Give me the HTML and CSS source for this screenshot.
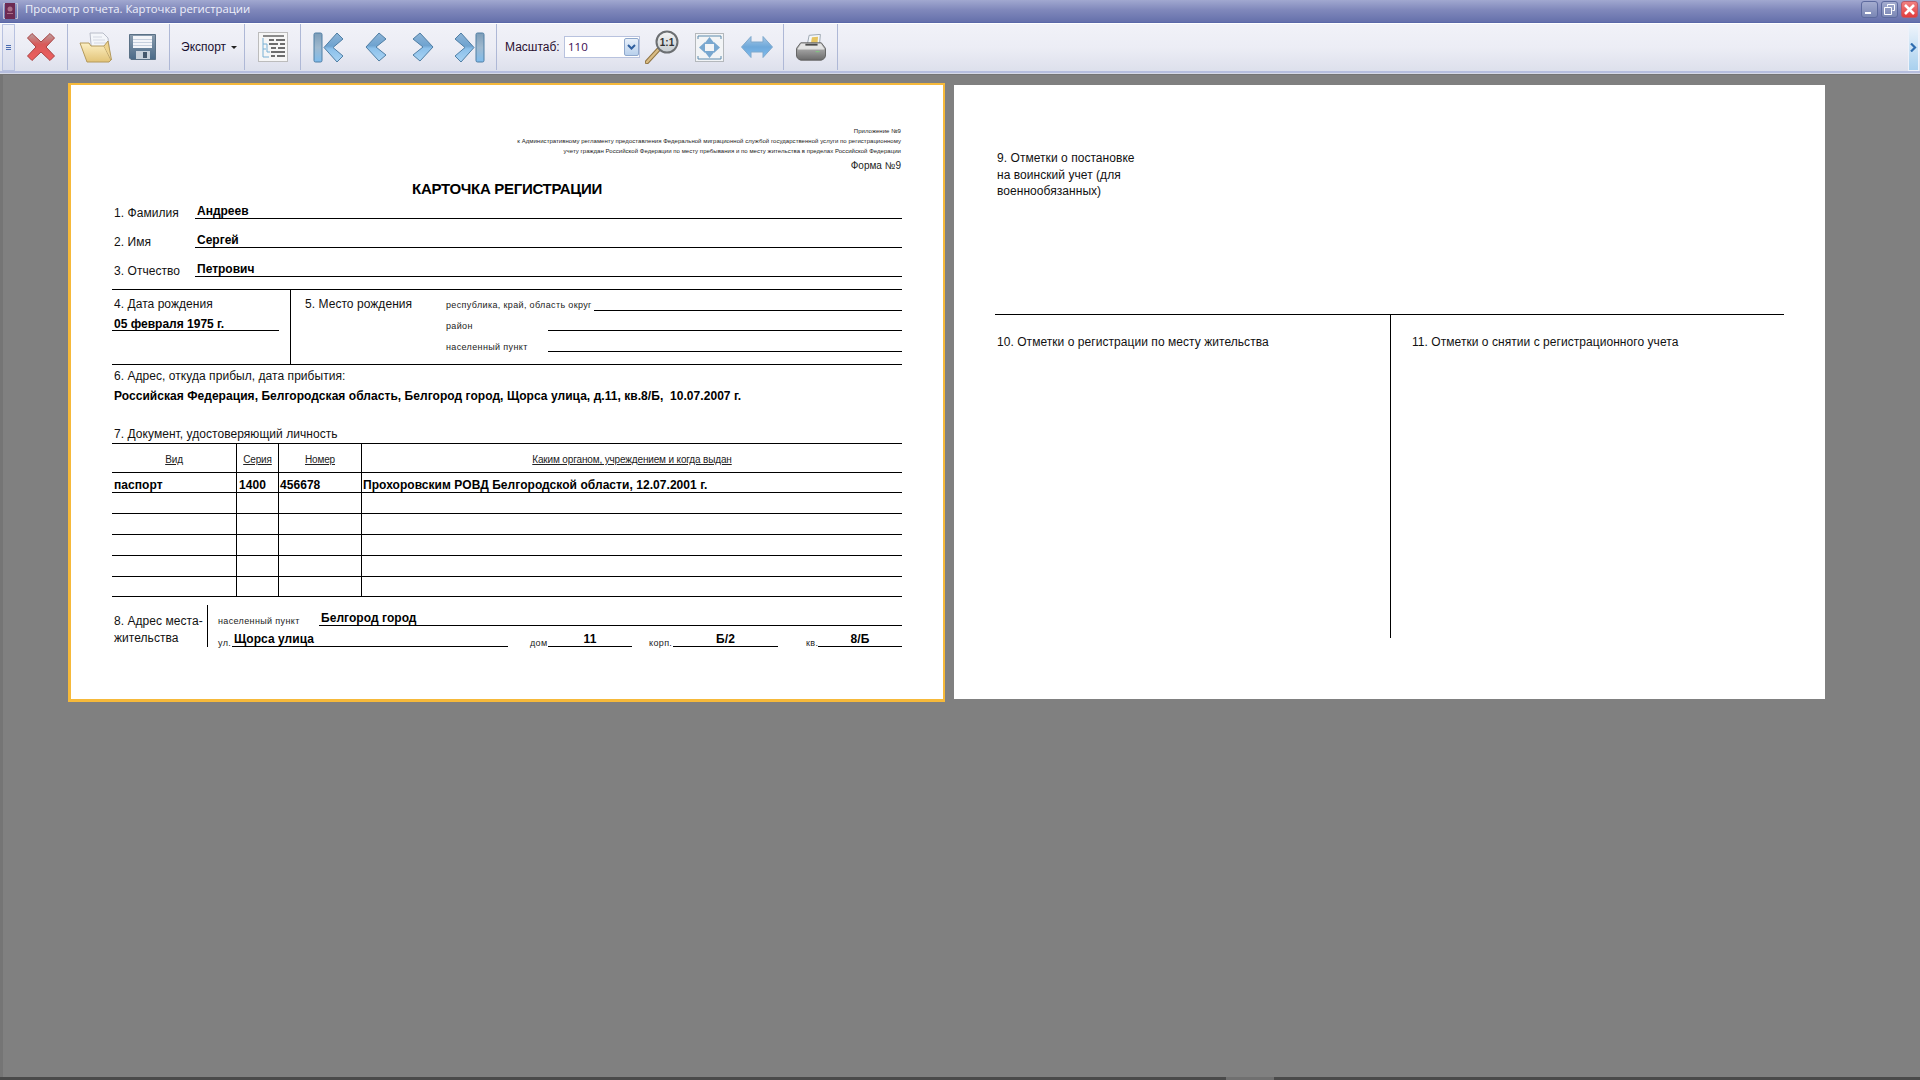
FILE: index.html
```html
<!DOCTYPE html>
<html lang="ru">
<head>
<meta charset="utf-8">
<title>Просмотр отчета. Карточка регистрации</title>
<link rel="stylesheet" href="styles.css">
</head>
<body>
<svg class="defs" width="0" height="0" aria-hidden="true">
  <defs>
    <linearGradient id="gBlue" x1="0" y1="0" x2="0" y2="1"><stop offset="0" stop-color="#8db4d6"/><stop offset=".45" stop-color="#6fa3d0"/><stop offset=".55" stop-color="#8cc0ea"/><stop offset="1" stop-color="#a9d4f4"/></linearGradient>
    <linearGradient id="gBar" x1="0" y1="0" x2="0" y2="1"><stop offset="0" stop-color="#7d9db8"/><stop offset=".5" stop-color="#9fb9cf"/><stop offset="1" stop-color="#7fbcec"/></linearGradient>
    <linearGradient id="gRed" x1="0" y1="0" x2="0" y2="1"><stop offset="0" stop-color="#b8a0a0"/><stop offset=".4" stop-color="#d95a5a"/><stop offset="1" stop-color="#ee5f5f"/></linearGradient>
    <linearGradient id="gFold" x1="0" y1="0" x2="0" y2="1"><stop offset="0" stop-color="#fdf0c4"/><stop offset="1" stop-color="#e2c377"/></linearGradient>
    <linearGradient id="gDisk" x1="0" y1="0" x2="0" y2="1"><stop offset="0" stop-color="#8a9cae"/><stop offset="1" stop-color="#4a6a88"/></linearGradient>
    <linearGradient id="gPrn" x1="0" y1="0" x2="0" y2="1"><stop offset="0" stop-color="#c4c4c4"/><stop offset="1" stop-color="#6a6a6a"/></linearGradient>
    <linearGradient id="gArrow" x1="0" y1="0" x2="0" y2="1"><stop offset="0" stop-color="#a6c8e6"/><stop offset=".5" stop-color="#6ea8da"/><stop offset="1" stop-color="#7fbdf0"/></linearGradient>
    <linearGradient id="gLens" x1="0" y1="0" x2="0" y2="1"><stop offset="0" stop-color="#f4f4f4"/><stop offset="1" stop-color="#c6ccd0"/></linearGradient>
  </defs>
</svg>

<header class="titlebar">
  <svg class="app-icon" width="17" height="18" viewBox="0 0 17 18">
    <path d="M3.500 1.500H1.500V16.500H3.500M13.500 1.500H15.500V16.500H13.500" fill="none" stroke="#c4c4d4"/>
    <rect x="3" y="1" width="10" height="16" fill="#6d2a52"/>
    <circle cx="8" cy="7" r="2.500" fill="#a8708a"/>
    <rect x="5" y="11" width="6" height="1" fill="#a8708a"/>
  </svg>
  <span class="title-text">Просмотр отчета. Карточка регистрации</span>
  <div class="win-btns">
    <span class="win-btn"><svg width="17" height="17" viewBox="0 0 17 17"><rect x="4" y="11" width="6" height="2" fill="#fff"/></svg></span>
    <span class="win-btn"><svg width="17" height="17" viewBox="0 0 17 17"><path d="M6.500 5.500V3.500H13.500V9.500H11.500M3.500 6.500H10.500V13.500H3.500Z" fill="none" stroke="#fff"/></svg></span>
    <span class="win-btn win-close"><svg width="17" height="17" viewBox="0 0 17 17"><path d="M4 4L13 13M13 4L4 13" stroke="#fff" stroke-width="2.600"/></svg></span>
  </div>
</header>

<nav class="toolbar">
  <div class="grip"><span class="grip-dots"></span></div>
  <div class="tb-group tb-first">
    <span class="tb-btn"><svg width="30" height="30" viewBox="0 0 30 30"><path d="M6 1.500L15 10 24 1.500 28.500 6 20 15 28.500 24 24 28.500 15 20 6 28.500 1.500 24 10 15 1.500 6Z" fill="url(#gRed)" stroke="#a84444" stroke-linejoin="round"/></svg></span>
  </div>
  <div class="tb-group">
    <span class="tb-btn"><svg width="34" height="32" viewBox="0 0 34 32">
      <path d="M11 2H24L29 7 31 24H13Z" fill="#f4f6fa" stroke="#b8bcc8"/>
      <path d="M14 6H23M14 9H26M15 12H27" stroke="#d4d8e2"/>
      <path d="M1 12H10L12 15H25L32 29 30 31H8Z" fill="url(#gFold)" stroke="#b49a5c"/>
      <path d="M25 15L29 10 32.500 29" fill="#f0d58f" stroke="#b49a5c"/>
    </svg></span>
    <span class="tb-btn"><svg width="30" height="29" viewBox="0 0 30 29">
      <path d="M1.500 1.500H27.500V26.500H3L1.500 25Z" fill="url(#gDisk)" stroke="#5a7186"/>
      <rect x="5" y="3" width="19" height="12" fill="#f3f5f9"/>
      <path d="M5 6.500H24M5 9.500H24M5 12.500H24" stroke="#c6d0de"/>
      <rect x="8" y="18" width="14" height="8" fill="#c8d2dc"/>
      <rect x="15" y="19" width="4" height="6" fill="#44586c"/>
    </svg></span>
  </div>
  <div class="tb-group tb-export">
    <span class="tb-label">Экспорт</span><span class="caret"></span>
  </div>
  <div class="tb-group tb-list">
    <span class="tb-btn"><svg width="30" height="30" viewBox="0 0 30 30">
      <rect x="0.500" y="0.500" width="29" height="29" fill="#f6f6f6" stroke="#bcbcbc"/>
      <path d="M5 4H26" stroke="#8a8a8a" stroke-width="2"/>
      <path d="M11 8H16M18 8H27M11 12H20M22 12H27M13 16H18M20 16H27M13 20H27M13 24H17M19 24H27" stroke="#6e6e6e" stroke-width="2"/>
      <path d="M5 6V25H11M5 12H9M9 12V20H12M5 17H8" fill="none" stroke="#79b0d4"/>
    </svg></span>
  </div>
  <div class="tb-group">
    <span class="tb-btn"><svg width="31" height="31" viewBox="0 0 31 31">
      <rect x="1" y="1" width="8" height="29" rx="1.500" fill="url(#gBar)" stroke="#4f7ea4"/>
      <path d="M24 1L30 7 20 15.500 30 24 24 30 11 15.500Z" fill="url(#gBlue)" stroke="#4f7ea4" stroke-linejoin="round"/>
    </svg></span>
    <span class="tb-btn"><svg width="22" height="30" viewBox="0 0 22 30">
      <path d="M14 1L21 7 11 15 21 23 14 29 1 15Z" fill="url(#gBlue)" stroke="#4f7ea4" stroke-linejoin="round"/>
    </svg></span>
    <span class="tb-btn"><svg width="22" height="30" viewBox="0 0 22 30">
      <path d="M8 1L1 7 11 15 1 23 8 29 21 15Z" fill="url(#gBlue)" stroke="#4f7ea4" stroke-linejoin="round"/>
    </svg></span>
    <span class="tb-btn"><svg width="31" height="31" viewBox="0 0 31 31">
      <rect x="22" y="1" width="8" height="29" rx="1.500" fill="url(#gBar)" stroke="#4f7ea4"/>
      <path d="M7 1L1 7 11 15.500 1 24 7 30 20 15.500Z" fill="url(#gBlue)" stroke="#4f7ea4" stroke-linejoin="round"/>
    </svg></span>
  </div>
  <div class="tb-group tb-scale">
    <label class="scale-label">Масштаб:</label>
    <div class="scale-box">
      <span class="scale-val">110</span>
      <span class="scale-drop"><svg width="9" height="7" viewBox="0 0 9 7"><path d="M1 1L4.500 4.500 8 1" fill="none" stroke="#2f5f9e" stroke-width="2"/></svg></span>
    </div>
    <span class="tb-btn tb-lens"><svg width="36" height="34" viewBox="0 0 36 34">
      <path d="M2 32L13 20" stroke="#8f7342" stroke-width="4.500" stroke-linecap="round"/>
      <path d="M2 32L13 20" stroke="#d9bc84" stroke-width="2.500" stroke-linecap="round"/>
      <circle cx="22" cy="12" r="10.500" fill="url(#gLens)" stroke="#6c6f72" stroke-width="2"/>
      <text x="22" y="16" class="lens-text">1:1</text>
    </svg></span>
    <span class="tb-btn"><svg width="29" height="29" viewBox="0 0 29 29">
      <rect x="0.500" y="0.500" width="28" height="28" fill="#f2f4f6" stroke="#b4b8bc"/>
      <path d="M14.500 4L20 11H9ZM14.500 25L9 18H20ZM4 14.500L10 9V20ZM25 14.500L19 20V9Z" fill="#79a8d0"/>
      <path d="M3 6V3H26V6M3 23V26H26V23" fill="none" stroke="#5d8aac"/>
    </svg></span>
    <span class="tb-btn"><svg width="32" height="22" viewBox="0 0 32 22">
      <path d="M10 0.500V6H22V0.500L31.500 11 22 21.500V16H10V21.500L0.500 11Z" fill="url(#gArrow)" stroke="#7fa8cc" stroke-linejoin="round"/>
    </svg></span>
  </div>
  <div class="tb-group tb-print">
    <span class="tb-btn"><svg width="30" height="27" viewBox="0 0 32 28">
      <path d="M12 11L14 1 26 0 25 11Z" fill="#f4f7fa" stroke="#9aa4ae"/>
      <path d="M16 9L17 3 23.500 2.500 23 9Z" fill="#e6c460"/>
      <path d="M5 9H27L31.500 15V22Q31.500 26 27 27.500H5Q.5 26 .5 22V15Z" fill="url(#gPrn)" stroke="#5e5e5e" stroke-linejoin="round"/>
      <path d="M5.500 10H26.500L30 15H2Z" fill="#e4e4e4"/>
      <rect x="10" y="10" width="13" height="2" fill="#4a4a4a"/>
      <path d="M2 15.500H30" stroke="#f6f6f6"/>
      <rect x="21" y="18" width="4" height="1" fill="#7ad07a"/>
    </svg></span>
  </div>
  <div class="tb-spacer"></div>
  <div class="tb-more"><svg width="7" height="9" viewBox="0 0 7 9"><path d="M1 .5L5 4.500 1 8.500" fill="none" stroke="#2f6db0" stroke-width="2.200"/></svg></div>
</nav>

<main class="canvas">
  <section class="page page-selected">
    <div class="notes">
      <p>Приложение №9</p>
      <p class="note-long">к Административному регламенту предоставления Федеральной миграционной службой государственной услуги по регистрационному</p>
      <p class="note-mid">учету граждан Российской Федерации по месту пребывания и по месту жительства в пределах Российской Федерации</p>
    </div>
    <p class="form-no">Форма №9</p>
    <h1 class="card-title">КАРТОЧКА РЕГИСТРАЦИИ</h1>

    <div class="name-row name-first"><span class="name-label">1. Фамилия</span><span class="name-value">Андреев</span></div>
    <div class="name-row"><span class="name-label">2. Имя</span><span class="name-value">Сергей</span></div>
    <div class="name-row"><span class="name-label">3. Отчество</span><span class="name-value">Петрович</span></div>

    <div class="birth">
      <div class="birth-date">
        <div class="lbl">4. Дата рождения</div>
        <div class="birth-value">05 февраля 1975 г.</div>
      </div>
      <div class="birth-place">
        <div class="lbl place-title">5. Место рождения</div>
        <div class="place-rows">
          <div class="place-row place-h21"><span class="small place-a">республика, край, область округ</span><span class="place-line"></span></div>
          <div class="place-row place-h20"><span class="small place-b">район</span><span class="place-line"></span></div>
          <div class="place-row place-h21"><span class="small place-b">населенный пункт</span><span class="place-line"></span></div>
        </div>
      </div>
    </div>

    <div class="lbl addr-label">6. Адрес, откуда прибыл, дата прибытия:</div>
    <div class="val addr-value">Российская Федерация, Белгородская область, Белгород город, Щорса улица, д.11, кв.8/Б,&nbsp; 10.07.2007 г.</div>
    <div class="lbl doc-label">7. Документ, удостоверяющий личность</div>

    <div class="doc-table">
      <div class="tr tr-head"><div class="td th">Вид</div><div class="td th">Серия</div><div class="td th">Номер</div><div class="td th">Каким органом, учреждением и когда выдан</div></div>
      <div class="tr tr-20"><div class="td val">паспорт</div><div class="td val">1400</div><div class="td val">456678</div><div class="td val">Прохоровским РОВД Белгородской области, 12.07.2001 г.</div></div>
      <div class="tr tr-21"><div class="td"></div><div class="td"></div><div class="td"></div><div class="td"></div></div>
      <div class="tr tr-21"><div class="td"></div><div class="td"></div><div class="td"></div><div class="td"></div></div>
      <div class="tr tr-21"><div class="td"></div><div class="td"></div><div class="td"></div><div class="td"></div></div>
      <div class="tr tr-21"><div class="td"></div><div class="td"></div><div class="td"></div><div class="td"></div></div>
      <div class="tr tr-20"><div class="td"></div><div class="td"></div><div class="td"></div><div class="td"></div></div>
    </div>

    <div class="residence">
      <div class="lbl res-label">8. Адрес места-<br>жительства</div>
      <div class="res-fields">
        <div class="res-row">
          <span class="small res-city-label">населенный пункт</span>
          <span class="val res-city">Белгород город</span>
        </div>
        <div class="res-row">
          <span class="small res-k1">ул.</span><span class="val res-street">Щорса улица</span>
          <span class="small res-k2">дом</span><span class="val res-num res-w84">11</span>
          <span class="small res-k3">корп.</span><span class="val res-num res-w105">Б/2</span>
          <span class="small res-k4">кв.</span><span class="val res-num res-w84">8/Б</span>
        </div>
      </div>
    </div>
  </section>

  <section class="page page-back">
    <div class="mil">9. Отметки о постановке<br>на воинский учет (для<br>военнообязанных)</div>
    <div class="marks">
      <div class="marks-left lbl">10. Отметки о регистрации по месту жительства</div>
      <div class="marks-right lbl">11. Отметки о снятии с регистрационного учета</div>
    </div>
  </section>
</main>
<div class="statusline"><span class="status-seg"></span></div>
</body>
</html>
```
FILE: styles.css
```css
* { box-sizing: border-box; }
html, body { margin: 0; height: 100%; }
body {
  display: flex;
  flex-direction: column;
  height: 1080px;
  width: 1920px;
  overflow: hidden;
  background: #808080;
  font-family: "Liberation Sans", Arial, sans-serif;
  color: #000;
}
p, h1 { margin: 0; font-weight: normal; }
.defs { position: absolute; }

/* title bar */
.titlebar {
  flex: none;
  height: 23px;
  display: flex;
  align-items: center;
  background: linear-gradient(#a1a8d0, #8088bb 45%, #6570ab);
  border-bottom: 1px solid #5a68a8;
  padding-left: 2px;
}
.app-icon { flex: none; }
.title-text {
  margin-left: 6px;
  font: 11.3px/20px "Open Sans", "Noto Sans", sans-serif;
  color: #eef0fa;
  margin-top: -5px;
}
.win-btns {
  margin-left: auto;
  display: flex;
  gap: 3px;
  padding-right: 2px;
  align-self: flex-start;
  padding-top: 1px;
}
.win-btn {
  width: 17px;
  height: 17px;
  border: 1px solid #5d6a9e;
  border-radius: 3px;
  background: linear-gradient(#a4accf, #7a86b4);
  display: flex;
  align-items: center;
  justify-content: center;
}
.win-btn svg { flex: none; margin: -1px; }
.win-close { background: linear-gradient(#f08080, #e23c3c); border-color: #b85a6a; }

/* toolbar */
.toolbar {
  flex: none;
  height: 50px;
  display: flex;
  align-items: stretch;
  background: linear-gradient(#f1f2f8, #ecedf5 50%, #dde0ec);
  border-top: 1px solid #fff;
  border-bottom: 2px solid #b6bede;
  box-shadow: 0 1px 0 #d6d9e6;
  margin-bottom: 1px;
}
.grip {
  flex: none;
  width: 13px;
  margin-left: 2px;
  border: 1px solid #b8c2e0;
  background: linear-gradient(#eef0f8, #d8dcec);
  display: flex;
  align-items: center;
  justify-content: center;
}
.grip-dots {
  width: 5px;
  height: 5px;
  background: repeating-linear-gradient(#4a6cb0 0 1px, transparent 1px 2px);
}
.tb-group {
  flex: none;
  display: flex;
  align-items: center;
  padding: 0 3px 0 4px;
  border-right: 1px solid #aeb8d6;
  margin-bottom: 1px;
}
.tb-first { padding-left: 2px; }
.tb-list { padding-right: 4px; }
.tb-btn {
  flex: none;
  width: 47px;
  height: 47px;
  display: flex;
  align-items: center;
  justify-content: center;
}
.tb-lens { width: 46px; }
.tb-print .tb-btn { margin-left: -1px; }
.tb-export { width: 75px; padding: 0 0 0 11px; }
.tb-label { font: 12px/16px "Liberation Sans", sans-serif; width: 50px; color: #1a1030; }
.caret {
  width: 0;
  height: 0;
  border: 3px solid transparent;
  border-top: 3px solid #222;
  border-bottom: 0;
}
.tb-scale { padding-left: 8px; }
.scale-label { font: 12px/16px "Liberation Sans", sans-serif; width: 59px; color: #2a1030; }
.scale-box {
  width: 76px;
  height: 22px;
  background: #fff;
  border: 1px solid #b8c2de;
  display: flex;
  align-items: center;
  justify-content: space-between;
  padding: 0 0 0 3px;
}
.scale-val { font: 11.5px/16px "Open Sans", sans-serif; color: #3a0a50; }
.scale-drop {
  width: 15px;
  height: 18px;
  border: 1px solid #8fa8cc;
  border-radius: 2px;
  background: linear-gradient(#e8f0fa, #b8d0ec);
  display: flex;
  align-items: center;
  justify-content: center;
}
.lens-text { font: bold 10px "Liberation Sans", sans-serif; text-anchor: middle; fill: #333; }
.tb-spacer { flex: 1; }
.tb-more {
  flex: none;
  width: 11px;
  margin-right: 1px;
  border: 1px solid #eef2fa;
  background: linear-gradient(#eef4fb, #a8d0ee);
  display: flex;
  align-items: center;
  justify-content: center;
}

/* canvas */
.canvas {
  flex: 1;
  display: flex;
  align-items: flex-start;
  gap: 9px;
  padding: 9px 0 0 68px;
  background: #808080;
  box-shadow: inset 3px 1px 0 #757575;
}
.page { flex: none; background: #fff; width: 871px; height: 614px; }
.page-selected {
  width: 877px;
  height: 619px;
  border-style: solid;
  border-color: #f6b93a;
  border-width: 2px 2px 3px 3px;
  padding: 41px 41px 0;
}
.page-back { margin-top: 2px; padding: 65px 41px 0; }

/* form typography */
.lbl { font-size: 12px; line-height: 16px; letter-spacing: .05px; color: #111; }
.val { font-size: 12px; line-height: 16px; font-weight: bold; letter-spacing: .05px; }
.small { font-size: 9px; line-height: 12px; letter-spacing: .36px; color: #222; white-space: nowrap; }

.notes { text-align: right; font-size: 6px; line-height: 10px; letter-spacing: .04px; color: #222; padding-right: 1px; }
.note-long, .note-mid { white-space: nowrap; }
.form-no { text-align: right; font-size: 10px; line-height: 16px; margin-top: 2px; padding-right: 1px; color: #222; }
.card-title {
  margin-top: 7px;
  margin-bottom: -1px;
  font-size: 15px;
  line-height: 16px;
  font-weight: bold;
  text-align: center;
  letter-spacing: -.3px;
}

.name-row { display: flex; height: 29px; align-items: flex-end; }
.name-first { height: 23px; }
.name-label { width: 83px; flex: none; padding-left: 2px; font-size: 12px; line-height: 16px; letter-spacing: .05px; margin-bottom: -2px; color: #111; }
.name-value {
  flex: 1;
  height: 17px;
  border-bottom: 1px solid #000;
  padding-left: 2px;
  font-size: 12px;
  line-height: 19px;
  font-weight: bold;
}

.birth {
  display: flex;
  margin-top: 12px;
  height: 76px;
  border-top: 1px solid #000;
  border-bottom: 1px solid #000;
}
.birth-date { width: 179px; flex: none; border-right: 1px solid #000; padding-top: 6px; }
.birth-date .lbl { padding-left: 2px; }
.birth-value {
  width: 167px;
  height: 19px;
  border-bottom: 1px solid #000;
  padding-left: 2px;
  font-size: 12px;
  line-height: 24px;
  font-weight: bold;
}
.birth-place { flex: 1; display: flex; }
.place-title { width: 155px; flex: none; padding: 6px 0 0 14px; }
.place-rows { flex: 1; display: flex; flex-direction: column; }
.place-row { display: flex; align-items: flex-end; }
.place-h21 { height: 21px; }
.place-h20 { height: 20px; }
.place-a { width: 148px; flex: none; }
.place-b { width: 102px; flex: none; margin-bottom: -1px; }
.place-line { flex: 1; border-bottom: 1px solid #000; }

.addr-label { margin-top: 3px; padding-left: 2px; }
.addr-value { margin-top: 4px; padding-left: 2px; white-space: nowrap; }
.doc-label { margin-top: 22px; margin-bottom: 1px; padding-left: 2px; }

.doc-table { border-top: 1px solid #000; }
.tr {
  display: grid;
  grid-template-columns: 125px 42px 83px 1fr;
  border-bottom: 1px solid #000;
}
.tr-head { height: 29px; }
.tr-20 { height: 20px; }
.tr-21 { height: 21px; }
.td { border-right: 1px solid #000; padding-left: 2px; white-space: nowrap; line-height: 24px; }
.td:nth-child(n+3) { padding-left: 1px; }
.td:last-child { border-right: 0; }
.th {
  text-align: center;
  font-size: 10px;
  line-height: 32px;
  letter-spacing: -.15px;
  text-decoration: underline;
  color: #222;
}
.tr .th { padding-left: 0; }

.residence { display: flex; margin-top: 8px; height: 42px; }
.res-label { width: 96px; flex: none; border-right: 1px solid #000; padding: 8px 0 0 2px; line-height: 17px; white-space: nowrap; }
.res-fields { flex: 1; padding-left: 10px; display: flex; flex-direction: column; }
.res-row { display: flex; height: 21px; align-items: flex-end; }
.res-city-label { width: 101px; flex: none; line-height: 14px; margin-bottom: -2px; }
.res-city { flex: 1; height: 18px; border-bottom: 1px solid #000; padding-left: 2px; line-height: 21px; }
.res-k1 { width: 14px; flex: none; margin-bottom: -2px; }
.res-street { width: 276px; flex: none; height: 18px; border-bottom: 1px solid #000; padding-left: 2px; line-height: 20px; }
.res-k2 { margin-left: 22px; width: 18px; flex: none; margin-bottom: -2px; }
.res-k3 { margin-left: 17px; width: 24px; flex: none; margin-bottom: -2px; }
.res-k4 { margin-left: 28px; width: 12px; flex: none; margin-bottom: -2px; }
.res-num { flex: none; height: 18px; border-bottom: 1px solid #000; text-align: center; line-height: 20px; }
.res-w84 { width: 84px; }
.res-w105 { width: 105px; }

/* back page */
.mil { height: 164px; padding-left: 2px; line-height: 16.500px; font-size: 12px; letter-spacing: .05px; color: #111; }
.marks { display: flex; height: 324px; width: 789px; border-top: 1px solid #000; }
.marks-left { width: 396px; flex: none; border-right: 1px solid #000; padding: 19px 0 0 2px; }
.marks-right { padding: 19px 0 0 21px; }

.statusline { flex: none; height: 3px; background: #4a4a4a; padding-left: 1226px; }
.status-seg { display: block; width: 48px; height: 3px; background: #707070; }
```
